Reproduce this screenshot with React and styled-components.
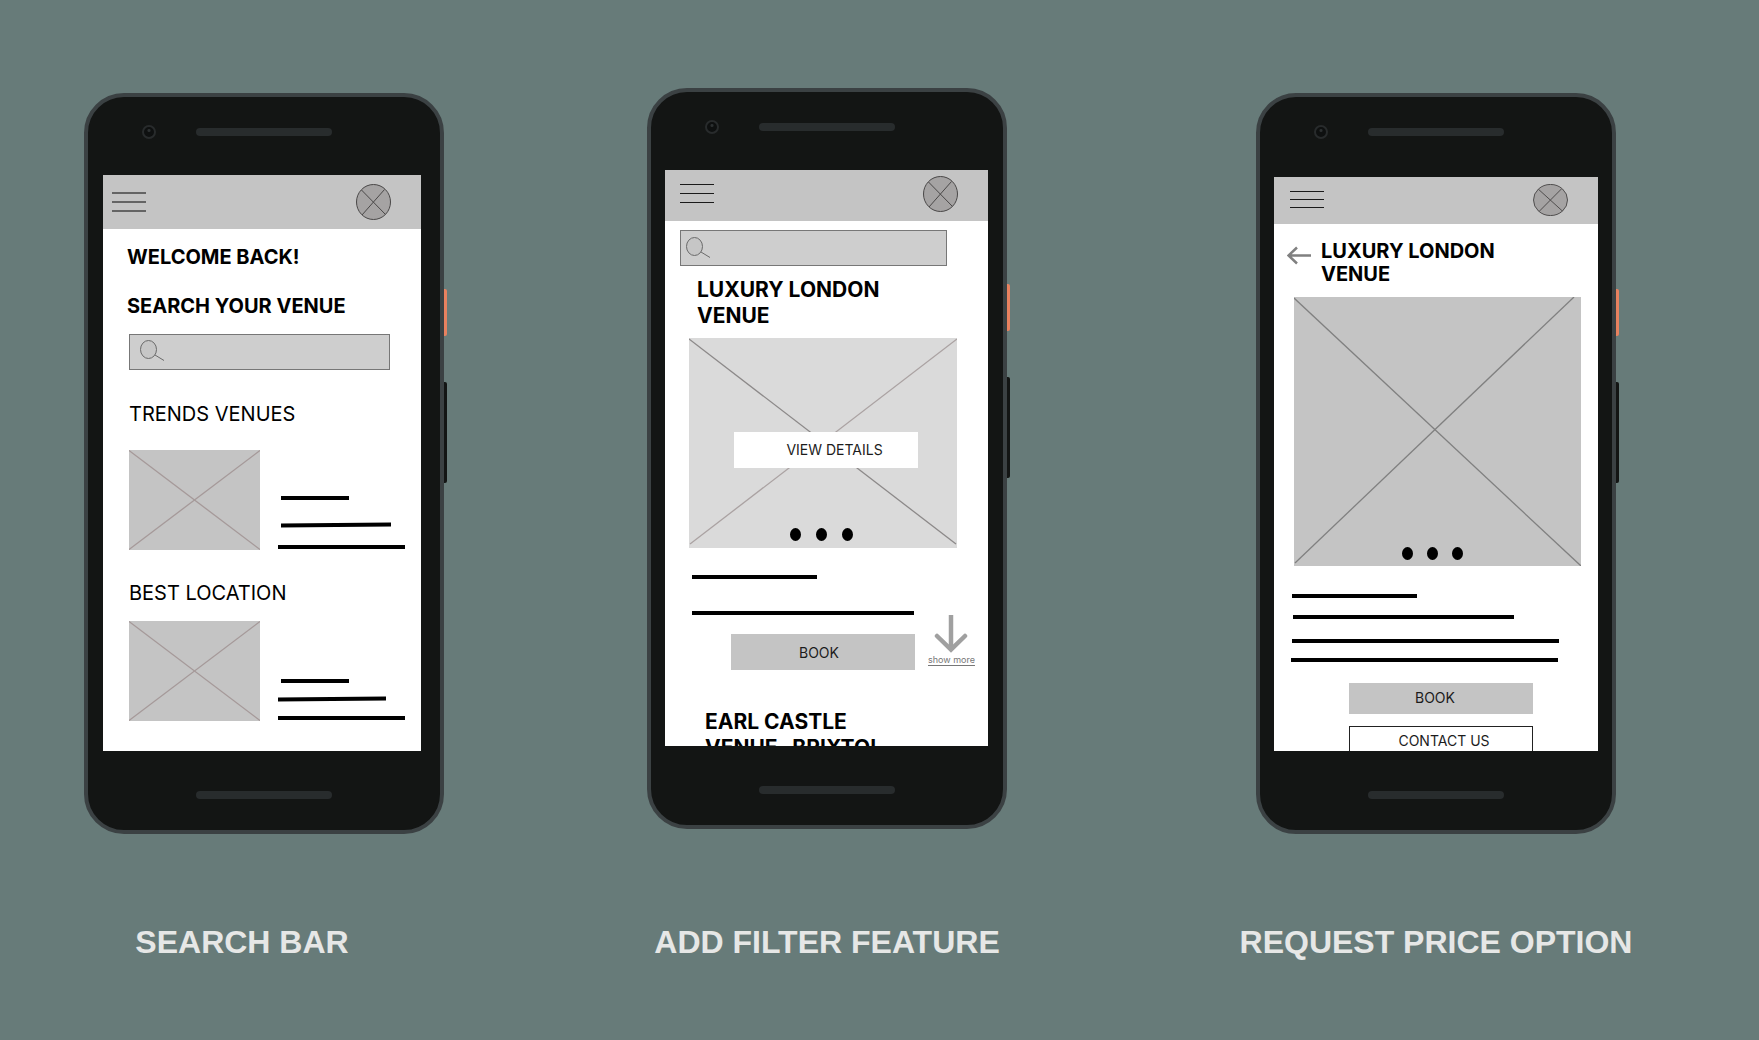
import React from "react";
import styled, { createGlobalStyle } from "styled-components";

const Global = createGlobalStyle`
  *, *::before, *::after { box-sizing: border-box; }
  body { margin: 0; background: #677b79; font-family: Inter, "Liberation Sans", sans-serif; color: #000; }
  button, input { font: inherit; color: inherit; }
  h2, h3, p { margin: 0; }
`;

const Board = styled.main`
  min-height: 100vh;
  display: grid;
  grid-template-columns: minmax(400px, 528fr) minmax(400px, 598fr) minmax(400px, 620fr);
  grid-template-rows: auto auto 1fr;
  row-gap: 90px;
  padding: 88px 13px 0 0;
`;

const Slot = styled.div`
  display: flex;
  justify-content: center;
  align-items: flex-start;
  padding-top: ${(p) => p.$drop || 0}px;
`;

const Caption = styled.h2`
  padding-right: ${(p) => p.$shift || 0}px;
  text-align: center;
  font: bold 32px/36px "Liberation Sans", Arial, sans-serif;
  color: #e6e7e6;
`;

const Phone = styled.section`
  position: relative;
  width: 360px;
  border: 4px solid #3b4143;
  border-radius: 40px;
  background: #131514;
`;

const SideKey = styled.span`
  position: absolute;
  left: 100%;
  margin-left: 4px;
  width: 3px;
  top: ${(p) => p.$top}px;
  height: ${(p) => p.$h}px;
  border-radius: 0 2px 2px 0;
  background: ${(p) => p.$color};
`;

const TopBezel = styled.div`
  display: flex;
  align-items: center;
  gap: 40px;
  height: ${(p) => p.$h}px;
  padding: 0 0 ${(p) => p.$h - 69}px 54px;
`;

const Camera = styled.span`
  width: 14px;
  height: 14px;
  border: 2px solid #282b2c;
  border-radius: 50%;
  background: radial-gradient(circle at 50% 35%, #2c3031 1px, #0e1010 2px);
`;

const Speaker = styled.span`
  width: 136px;
  height: 8px;
  border-radius: 4px;
  background: #282c2d;
`;

const BottomBezel = styled.div`
  display: flex;
  justify-content: center;
  height: 79px;
  padding-top: 40px;
`;

const Screen = styled.div`
  height: ${(p) => p.$h}px;
  margin: 0 ${(p) => p.$right}px 0 ${(p) => p.$left}px;
  overflow: hidden;
  background: #fff;
`;

const AppBar = styled.header`
  display: flex;
  align-items: center;
  justify-content: space-between;
  height: ${(p) => p.$h}px;
  padding: 0 30px ${(p) => p.$lift || 0}px ${(p) => p.$left}px;
  background: #c4c4c4;
`;

const IconButton = styled.button`
  display: flex;
  flex: none;
  padding: 0;
  border: 0;
  background: none;
`;

const Content = styled.div`
  display: flex;
  flex-direction: column;
  align-items: flex-start;
  padding: ${(p) => p.$pad};
`;

const Title = styled.h3`
  font-size: ${(p) => (p.$large ? 21 : 20)}px;
  font-weight: ${(p) => (p.$light ? 400 : 700)};
  line-height: ${(p) => p.$lh || 26}px;
  margin: ${(p) => p.$m || "0"};
`;

const SearchBox = styled.label`
  display: flex;
  align-items: center;
  width: ${(p) => p.$w}px;
  height: 36px;
  margin: ${(p) => p.$m};
  padding: ${(p) => p.$pad};
  border: 1px solid #777;
  background: #cecece;
`;

const SearchInput = styled.input`
  flex: 1;
  min-width: 0;
  height: 100%;
  border: 0;
  outline: 0;
  background: transparent;
`;

const VenueRow = styled.article`
  display: flex;
  align-items: flex-end;
  gap: 17px;
  margin: ${(p) => p.$m};
`;

const Lines = styled.div`
  display: flex;
  flex-direction: column;
`;

const CardLines = styled(Lines)`
  padding-bottom: 1px;
`;

const Line = styled.span`
  width: ${(p) => p.$w}px;
  height: 4px;
  margin: ${(p) => p.$m || "0"};
  background: #000;
  transform: rotate(${(p) => p.$tilt || 0}deg);
`;

const Picture = styled.div`
  display: grid;
  flex: none;
  width: ${(p) => p.$w}px;
  height: ${(p) => p.$h}px;
  margin: ${(p) => p.$m || "0"};
  background: ${(p) => p.$bg || "#c4c4c4"};
  > * { grid-area: 1 / 1; }
`;

const Dots = styled.div`
  display: flex;
  justify-self: center;
  align-self: end;
  gap: ${(p) => p.$gap}px;
  padding: ${(p) => p.$pad};
`;

const Dot = styled.span`
  width: 11px;
  height: 13px;
  border-radius: 50%;
  background: #000;
`;

const Action = styled.button`
  width: 184px;
  height: ${(p) => p.$h || 36}px;
  margin: ${(p) => p.$m || "0"};
  padding: ${(p) => p.$pad || "0"};
  border: ${(p) => (p.$outlined ? "1px solid #222" : "0")};
  background: ${(p) => p.$bg || "#c4c4c4"};
  color: #1c1c1c;
  font-size: 14px;
  line-height: 20px;
`;

const BookRow = styled.div`
  display: flex;
  align-items: flex-end;
  gap: 13px;
  margin: 0 0 0 42px;
`;

const MoreLink = styled.a`
  display: flex;
  flex-direction: column;
  align-items: center;
  margin-top: -1px;
  padding-bottom: 4px;
  color: #777;
  font-size: 9px;
  line-height: 12px;
  text-decoration: underline;
  text-underline-offset: 2px;
`;

const BackRow = styled.div`
  display: flex;
  align-items: flex-start;
  gap: 10px;
`;

function MenuIcon({ gap = 9, stroke = 1, color = "#1a1a1a" }) {
  const h = gap * 2 + 2;
  return (
    <svg width="35" height={h} shapeRendering="crispEdges" fill={color}>
      {[0, 1, 2].map((i) => (
        <rect key={i} x="0" y={i * gap} width="34" height={stroke} />
      ))}
    </svg>
  );
}

function AvatarIcon({ height = 36 }) {
  return (
    <svg width="35" height={height} viewBox="0 0 35 36" preserveAspectRatio="none" stroke="#4a4848">
      <ellipse cx="17.5" cy="18" rx="17" ry="17.5" fill="#a5a3a3" />
      <path d="M5.500 6 L29.500 30.500 M28.500 5.500 L6 31" fill="none" />
    </svg>
  );
}

function SearchIcon() {
  return (
    <svg width="26" height="22" fill="none" stroke="#6a6a6a">
      <ellipse cx="8.500" cy="9.500" rx="8" ry="9" fill="#c6c6c6" />
      <path d="M15 15 L24 20.500" />
    </svg>
  );
}

function Cross({ w, h, a, b, colorA = "#a59999", colorB = "#a59999" }) {
  return (
    <svg width={w} height={h} fill="none" strokeWidth="1.3">
      <path d={a} stroke={colorA} />
      <path d={b} stroke={colorB} />
    </svg>
  );
}

function Header({ h, left, lift, avatar, children }) {
  return (
    <AppBar $h={h} $left={left} $lift={lift}>
      <IconButton aria-label="Menu">{children}</IconButton>
      <IconButton aria-label="Profile"><AvatarIcon height={avatar} /></IconButton>
    </AppBar>
  );
}

function Device({ bezel = 78, left, right, height = 576, children }) {
  return (
    <Phone>
      <SideKey $top={192} $h={47} $color="#e8815f" />
      <SideKey $top={285} $h={101} $color="#131514" />
      <TopBezel $h={bezel}>
        <Camera />
        <Speaker />
      </TopBezel>
      <Screen $h={height} $left={left} $right={right}>{children}</Screen>
      <BottomBezel><Speaker /></BottomBezel>
    </Phone>
  );
}

function Search({ w, m, pad }) {
  return (
    <SearchBox $w={w} $m={m} $pad={pad}>
      <SearchIcon />
      <SearchInput type="text" aria-label="Search venues" />
    </SearchBox>
  );
}

function VenueCard({ m, children }) {
  return (
    <VenueRow $m={m}>
      <Picture $w={131} $h={100}>
        <Cross w={131} h={100} a="M0 0.500 L131 99.500" b="M131 0.500 L0 99.500" />
      </Picture>
      <CardLines>{children}</CardLines>
    </VenueRow>
  );
}

function Pager({ gap, pad }) {
  return (
    <Dots $gap={gap} $pad={pad}>
      <Dot /><Dot /><Dot />
    </Dots>
  );
}

function SearchScreen() {
  return (
    <Device left={15} right={19}>
      <Header h={54} left={9} avatar={36}>
        <MenuIcon stroke={2} color="#646464" />
      </Header>
      <Content $pad="15px 0 0 24px">
        <Title>WELCOME BACK!</Title>
        <Title $m="23px 0 0">SEARCH YOUR VENUE</Title>
        <Search w={261} m="15px 0 0 2px" pad="0 0 2px 10px" />
        <Title $light $m="31px 0 0 2px">TRENDS VENUES</Title>
        <VenueCard m="23px 0 0 2px">
          <Line $w={68} $m="0 0 0 4px" />
          <Line $w={110} $m="23px 0 0 4px" $tilt={-0.4} />
          <Line $w={127} $m="18px 0 0 1px" />
        </VenueCard>
        <Title $light $m="30px 0 0 2px">BEST LOCATION</Title>
        <VenueCard m="15px 0 0 2px">
          <Line $w={68} $m="0 0 0 4px" />
          <Line $w={108} $m="14px 0 0 1px" $tilt={-0.4} />
          <Line $w={127} $m="15px 0 0 1px" />
        </VenueCard>
      </Content>
    </Device>
  );
}

function FilterScreen() {
  return (
    <Device left={14} right={15}>
      <Header h={51} left={15} lift={4} avatar={36}><MenuIcon /></Header>
      <Content $pad="9px 0 0 15px">
        <Search w={267} m="0" pad="0 0 0 5px" />
        <Title $large $m="11px 0 0 17px">LUXURY LONDON<br />VENUE</Title>
        <Picture $w={268} $h={210} $m="9px 0 0 9px" $bg="#dadada">
          <Cross w={268} h={210} a="M0 1 L267 206" b="M268 1 L1 206" colorA="#8c8989" colorB="#aaa2a2" />
          <Action $bg="#fff" $m="94px 0 0 45px" $pad="0 0 0 17px">VIEW DETAILS</Action>
          <Pager gap={15} pad="0 4px 7px 0" />
        </Picture>
        <Lines>
          <Line $w={125} $m="27px 0 0 12px" />
          <Line $w={222} $m="32px 0 0 12px" />
        </Lines>
        <BookRow>
          <Action $m="19px 0 0 9px" $pad="2px 8px 0 0">BOOK</Action>
          <MoreLink href="#more">
            <svg width="34" height="40" fill="none" stroke="#a0a0a0" strokeWidth="4.500">
              <path d="M17 1 V35" />
              <path d="M3 22 L17 35.500 L31 22" strokeLinecap="round" />
            </svg>
            show more
          </MoreLink>
        </BookRow>
        <Title $large $m="39px 0 0 25px">EARL CASTLE<br />VENUE- BRIXTOL</Title>
      </Content>
    </Device>
  );
}

function PriceScreen() {
  return (
    <Device bezel={80} left={14} right={14} height={574}>
      <Header h={47} left={16} lift={2} avatar={32}><MenuIcon gap={8} /></Header>
      <Content $pad="16px 0 0 13px">
        <BackRow>
          <IconButton aria-label="Back">
            <svg width="24" height="32" fill="none" stroke="#808080" strokeWidth="2.500">
              <path d="M2 15.500 H24 M10 7.500 L1.500 15.500 L10 23.500" />
            </svg>
          </IconButton>
          <Title $lh={23}>LUXURY LONDON<br />VENUE</Title>
        </BackRow>
        <Picture $w={287} $h={269} $m="11px 0 0 7px">
          <Cross w={287} h={269} a="M0 1 L287 269" b="M280 0 L1 266" colorA="#808080" colorB="#808080" />
          <Pager gap={14} pad="0 11px 6px 0" />
        </Picture>
        <Lines>
          <Line $w={125} $m="28px 0 0 5px" />
          <Line $w={221} $m="17px 0 0 6px" />
          <Line $w={267} $m="20px 0 0 5px" />
          <Line $w={267} $m="15px 0 0 4px" />
        </Lines>
        <Action $h={31} $m="21px 0 0 62px" $pad="0 12px 1px 0">BOOK</Action>
        <Action $h={31} $m="12px 0 0 62px" $pad="0 0 1px 6px" $bg="#fff" $outlined>CONTACT US</Action>
      </Content>
    </Device>
  );
}

export default function App() {
  return (
    <>
      <Global />
      <Board>
        <Slot $drop={5}><SearchScreen /></Slot>
        <Slot><FilterScreen /></Slot>
        <Slot $drop={5}><PriceScreen /></Slot>
        <Caption $shift={44}>SEARCH BAR</Caption>
        <Caption>ADD FILTER FEATURE</Caption>
        <Caption>REQUEST PRICE OPTION</Caption>
      </Board>
    </>
  );
}
